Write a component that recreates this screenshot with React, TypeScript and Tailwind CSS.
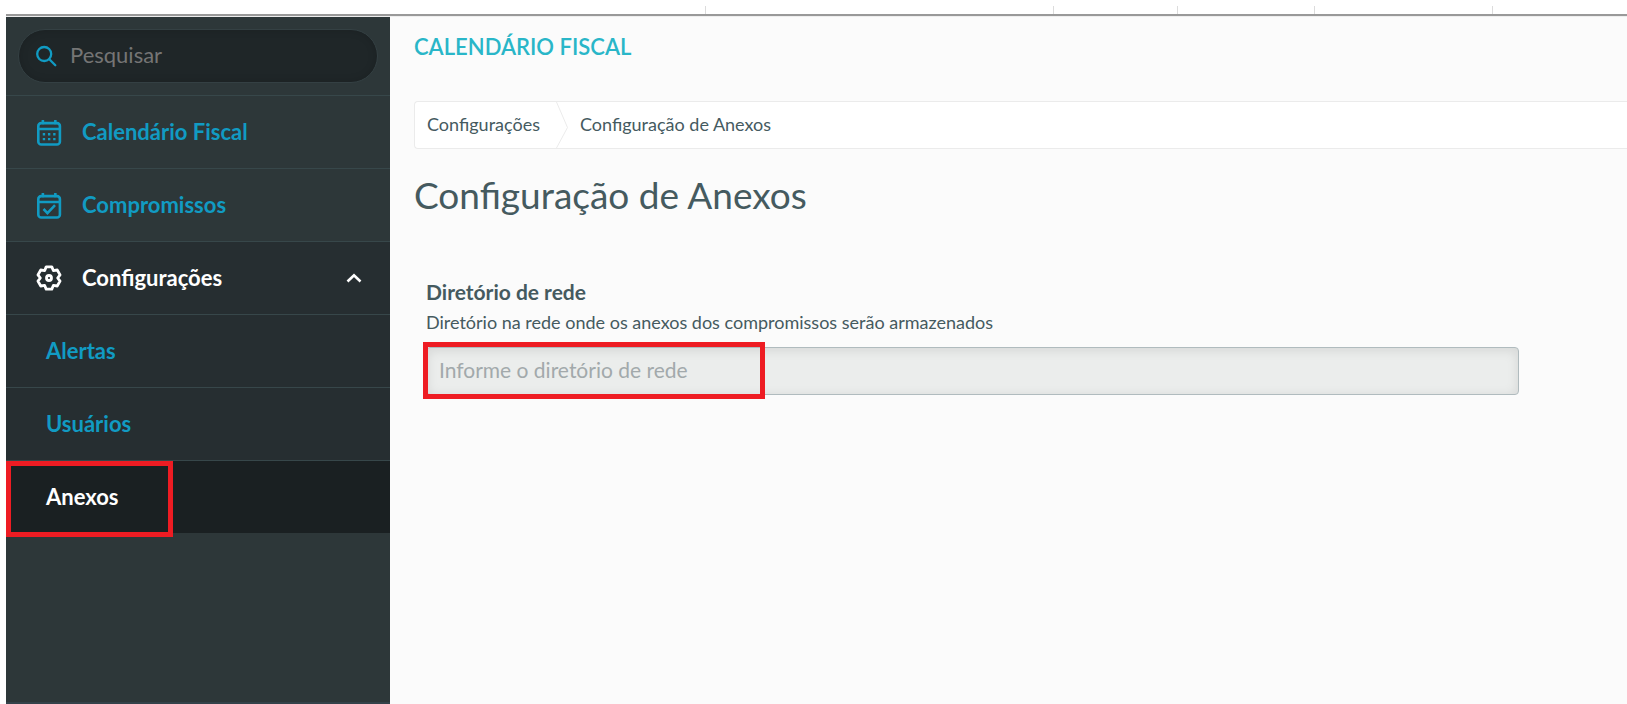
import React from "react";
import { clsx } from "clsx";

interface IconProps {
    className?: string;
}

const SearchIcon = ({ className }: IconProps) => (
    <svg viewBox="0 0 22 22" className={className} fill="none" stroke="currentColor" strokeWidth="2.3">
        <circle cx="9.2" cy="9" r="7" />
        <path d="m14.3 14.3 6 6" strokeLinecap="round" />
    </svg>
);

const CalendarFrame = () => (
    <>
        <rect x="2.2" y="4" width="20.8" height="20.6" rx="2.8" />
        <path d="M2.2 9.6H23M6.6 1v4M18.6 1v4" />
    </>
);

const CalendarIcon = ({ className }: IconProps) => (
    <svg viewBox="0 0 25 26" className={className} fill="none" stroke="currentColor" strokeWidth="2.5">
        <CalendarFrame />
        <path d="M6.5 14.7h2.3M11.5 14.7h2.3M16.5 14.7h2.3M6.5 19.4h2.3M11.5 19.4h2.3M16.5 19.4h2.3" strokeWidth="2.3" />
    </svg>
);

const CalendarCheckIcon = ({ className }: IconProps) => (
    <svg viewBox="0 0 25 26" className={className} fill="none" stroke="currentColor" strokeWidth="2.5">
        <CalendarFrame />
        <path d="m7.2 16.4 3.8 3.9 7.3-7.7" />
    </svg>
);

const GearIcon = ({ className }: IconProps) => (
    <svg viewBox="0.5 0.5 24 24" className={className} fill="none" stroke="currentColor" strokeWidth="2.6" strokeLinejoin="round">
        <path d="M9.9 2.2H15.1L16.5 5.6 20.1 5.1 22.7 9.6 20.5 12.5 22.7 15.4 20.1 19.9 16.5 19.4 15.1 22.8H9.9L8.5 19.4 4.9 19.9 2.3 15.4 4.5 12.5 2.3 9.6 4.9 5.1 8.5 5.6Z" />
        <circle cx="12.5" cy="12.5" r="2.3" />
    </svg>
);

const ChevronUp = ({ className }: IconProps) => (
    <svg viewBox="0 0 16 10" className={className} fill="none" stroke="currentColor" strokeWidth="2.6">
        <path d="m1.5 8.5 6.5-6.3 6.5 6.3" />
    </svg>
);

interface MenuItem {
    label: string;
    icon?: React.ReactNode;
    rowClass: string;
    marked?: boolean;
    expanded?: boolean;
}

const menu: MenuItem[] = [
    { label: "Calendário Fiscal", icon: <CalendarIcon className="h-[27px] w-[26px]" />, rowClass: "text-[#119bc3]" },
    { label: "Compromissos", icon: <CalendarCheckIcon className="h-[27px] w-[26px]" />, rowClass: "text-[#119bc3]" },
    { label: "Configurações", icon: <GearIcon className="size-[26px]" />, rowClass: "bg-[#262e31] text-white", expanded: true },
    { label: "Alertas", rowClass: "bg-[#262e31] text-[#119bc3]" },
    { label: "Usuários", rowClass: "bg-[#262e31] text-[#119bc3]" },
    { label: "Anexos", rowClass: "bg-[#1a2022] text-white", marked: true },
];

const MenuRow = ({ item }: { item: MenuItem }) => {
    const rowClass = clsx(
        "relative flex h-[73px] w-full items-center border-t border-[#37474a] text-left text-[22px] font-bold",
        item.icon ? "gap-5 pr-7 pl-[30px]" : "pl-10",
        item.rowClass
    );
    const content = (
        <>
            {item.icon}
            <span className="pb-0.5">{item.label}</span>
            {item.expanded && <ChevronUp className="ml-auto h-[10px] w-4" />}
            {item.marked && <span className="absolute top-0 left-0 h-[76px] w-[167px] border-5 border-[#ee1c23]" />}
        </>
    );

    return (
        <li>
            {item.expanded ? (
                <button type="button" aria-expanded="true" className={rowClass}>{content}</button>
            ) : (
                <a href="#" className={rowClass}>{content}</a>
            )}
        </li>
    );
};

const Sidebar = () => (
    <aside className="w-96 shrink-0 border-b-2 border-[#34424a] bg-[#2d3739]">
        <div className="p-3">
            <label className="flex h-[54px] items-center gap-[13px] rounded-full border border-[#344043] bg-[#1f2628] px-4 shadow-[inset_0_0_8px_rgba(0,0,0,0.15)]">
                <SearchIcon className="size-[22px] shrink-0 text-[#119bc3]" />
                <input
                    type="search"
                    aria-label="Pesquisar"
                    placeholder="Pesquisar"
                    className="w-full bg-transparent pb-1 text-[22px] text-white outline-none placeholder:text-[#757575]"
                />
            </label>
        </div>
        <nav>
            <ul>
                {menu.map((item) => (
                    <MenuRow key={item.label} item={item} />
                ))}
            </ul>
        </nav>
    </aside>
);

const Breadcrumb = () => (
    <nav className="flex h-12 items-center rounded-l border border-r-0 border-[#ebebeb] bg-white pl-3 text-lg">
        <a href="#" className="pb-0.5">Configurações</a>
        <svg viewBox="0 0 12 46" className="mr-3 ml-4 h-[46px] w-3" fill="none" stroke="#ebebeb">
            <path d="M.5 0 11.5 25.5.5 46" />
        </svg>
        <span className="pb-0.5">Configuração de Anexos</span>
    </nav>
);

export default function App() {
    return (
        <div className="flex min-h-screen flex-col bg-white pl-1.5 font-['Lato','Noto_Sans',sans-serif] text-[#455a5f]">
            {/* Lower edge of the column header strip */}
            <div className="flex h-[17px] shrink-0 flex-col border-b border-[#eeeeee] pt-1.5">
                <div className="flex h-2">
                    <div className="w-[700px] border-r border-[#dcdcdc]" />
                    <div className="w-[348px] border-r border-[#dcdcdc]" />
                    <div className="w-[124px] border-r border-[#dcdcdc]" />
                    <div className="w-[137px] border-r border-[#dcdcdc]" />
                    <div className="w-[178px] border-r border-[#dcdcdc]" />
                </div>
                <div className="h-0.5 bg-[#999999]" />
            </div>

            <div className="flex grow">
                <Sidebar />
                <main className="min-w-0 grow bg-[#fbfbfb] pt-3.5 pl-6">
                    <div className="mb-[38px] text-[22px] leading-8 font-semibold text-[#29b6c8]">CALENDÁRIO FISCAL</div>
                    <Breadcrumb />
                    <h1 className="mt-[22px] text-[37px] leading-12">Configuração de Anexos</h1>

                    <form className="mt-[57px] ml-3">
                        <label htmlFor="diretorio" className="block text-[21px] leading-8 font-bold">Diretório de rede</label>
                        <p id="diretorio-help" className="text-lg leading-7">
                            Diretório na rede onde os anexos dos compromissos serão armazenados
                        </p>
                        <div className="relative mt-[11px] w-[91%]">
                            <input
                                id="diretorio"
                                type="text"
                                aria-describedby="diretorio-help"
                                placeholder="Informe o diretório de rede"
                                className="block h-12 w-full rounded border border-[#b0bbbe] bg-[#ebedec] px-3 pb-1 text-[21px] shadow-[inset_0_2px_12px_rgba(0,0,0,0.1)] outline-none placeholder:text-[#a2a9ab]"
                            />
                            <span className="pointer-events-none absolute -top-[5px] -left-[3px] h-[57px] w-[342px] border-5 border-[#ee1c23]" />
                        </div>
                    </form>
                </main>
            </div>
        </div>
    );
}
